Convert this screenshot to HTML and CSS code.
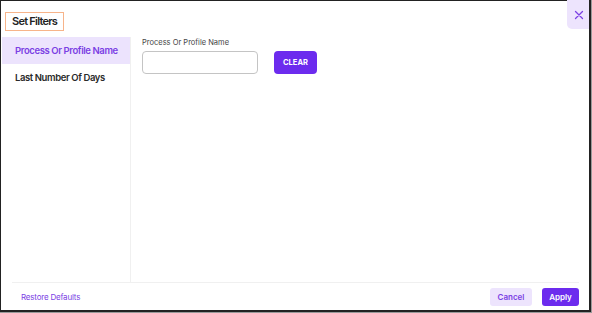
FILE: index.html
```html
<!DOCTYPE html>
<html lang="en">
<head>
    <meta charset="UTF-8">
    <title>Set Filters</title>
    <link rel="stylesheet" href="styles.css">
</head>
<body>
    <div class="dialog">
        <div class="dialog-header">
            <h2 class="dialog-title">Set Filters</h2>
            <button class="close-btn" aria-label="Close">
                <svg width="10" height="10" viewBox="0 0 10 10">
                    <path d="M1.5 1.5 L8.5 8.5 M8.5 1.5 L1.5 8.5" stroke="#7b3fe4" stroke-width="1.3" stroke-linecap="round"/>
                </svg>
            </button>
        </div>

        <div class="dialog-body">
            <ul class="filter-list">
                <li class="filter-item active">Process Or Profile Name</li>
                <li class="filter-item">Last Number Of Days</li>
            </ul>

            <div class="filter-panel">
                <label class="field-label" for="profile">Process Or Profile Name</label>
                <div class="field-row">
                    <input id="profile" class="text-input" type="text">
                    <button class="clear-btn">CLEAR</button>
                </div>
            </div>
        </div>

        <div class="dialog-footer">
            <a class="restore-link" href="#">Restore Defaults</a>
            <div class="footer-actions">
                <button class="cancel-btn">Cancel</button>
                <button class="apply-btn">Apply</button>
            </div>
        </div>
    </div>
</body>
</html>
```

FILE: styles.css
```css
* {
    box-sizing: border-box;
}

body {
    margin: 0;
    font-family: Inter, 'Liberation Sans', sans-serif;
    background: #9a9a9a;
}

.dialog {
    width: 591px;
    height: 312px;
    background: #fff;
    border: 1px solid #222;
    border-right-width: 2px;
    border-bottom-width: 2px;
    display: flex;
    flex-direction: column;
}

.dialog-header {
    display: flex;
    justify-content: space-between;
    align-items: flex-start;
    height: 35px;
}

.dialog-title {
    margin: 11px 0 0 4px;
    padding: 0 6px;
    height: 19px;
    line-height: 17px;
    font-size: 11px;
    font-weight: 600;
    letter-spacing: -0.75px;
    color: #222;
    border: 1px solid #f7b48a;
}

.close-btn {
    width: 22px;
    height: 29px;
    margin-top: -1px;
    border: none;
    border-radius: 0 0 0 5px;
    background: #ede4fd;
    display: flex;
    align-items: center;
    justify-content: center;
    padding: 0 0 0 2px;
    cursor: pointer;
}

.dialog-body {
    flex: 1;
    display: flex;
    margin-top: 1px;
}

.filter-list {
    list-style: none;
    margin: 0;
    padding: 0;
    width: 130px;
    border-right: 1px solid #f0f0f0;
}

.filter-item {
    height: 27px;
    line-height: 27px;
    padding-left: 13px;
    font-size: 9.5px;
    font-weight: 600;
    letter-spacing: -0.4px;
    white-space: nowrap;
    color: #2a2a2a;
    margin-left: 1px;
}

.filter-item.active {
    background: #ece3fd;
    color: #7b3fe4;
}

.filter-panel {
    padding: 1px 0 0 11px;
}

.field-label {
    display: block;
    font-size: 7.5px;
    color: #444;
    margin-bottom: 4px;
}

.field-row {
    display: flex;
    gap: 16px;
}

.text-input {
    width: 116px;
    height: 23px;
    border: 1px solid #c4c4c4;
    border-radius: 4px;
    outline: none;
}

.clear-btn {
    width: 43px;
    height: 23px;
    border: none;
    border-radius: 4px;
    background: #6c2bee;
    color: #fff;
    font-family: inherit;
    font-size: 7.5px;
    font-weight: 700;
    padding: 0;
}

.dialog-footer {
    height: 28px;
    margin: 0 10px 0 11px;
    border-top: 1px solid #f0f0f0;
    display: flex;
    justify-content: space-between;
    align-items: center;
}

.restore-link {
    font-size: 8px;
    letter-spacing: -0.2px;
    color: #7b3fe4;
    text-decoration: none;
    margin-left: 9px;
}

.footer-actions {
    display: flex;
    gap: 10px;
}

.cancel-btn,
.apply-btn {
    height: 18px;
    border: none;
    border-radius: 3px;
    font-family: inherit;
    font-size: 8px;
    font-weight: 600;
    padding: 0;
}

.cancel-btn {
    width: 42px;
    background: #ede4fd;
    color: #7b3fe4;
}

.apply-btn {
    width: 37px;
    background: #6c2bee;
    color: #fff;
}
```
